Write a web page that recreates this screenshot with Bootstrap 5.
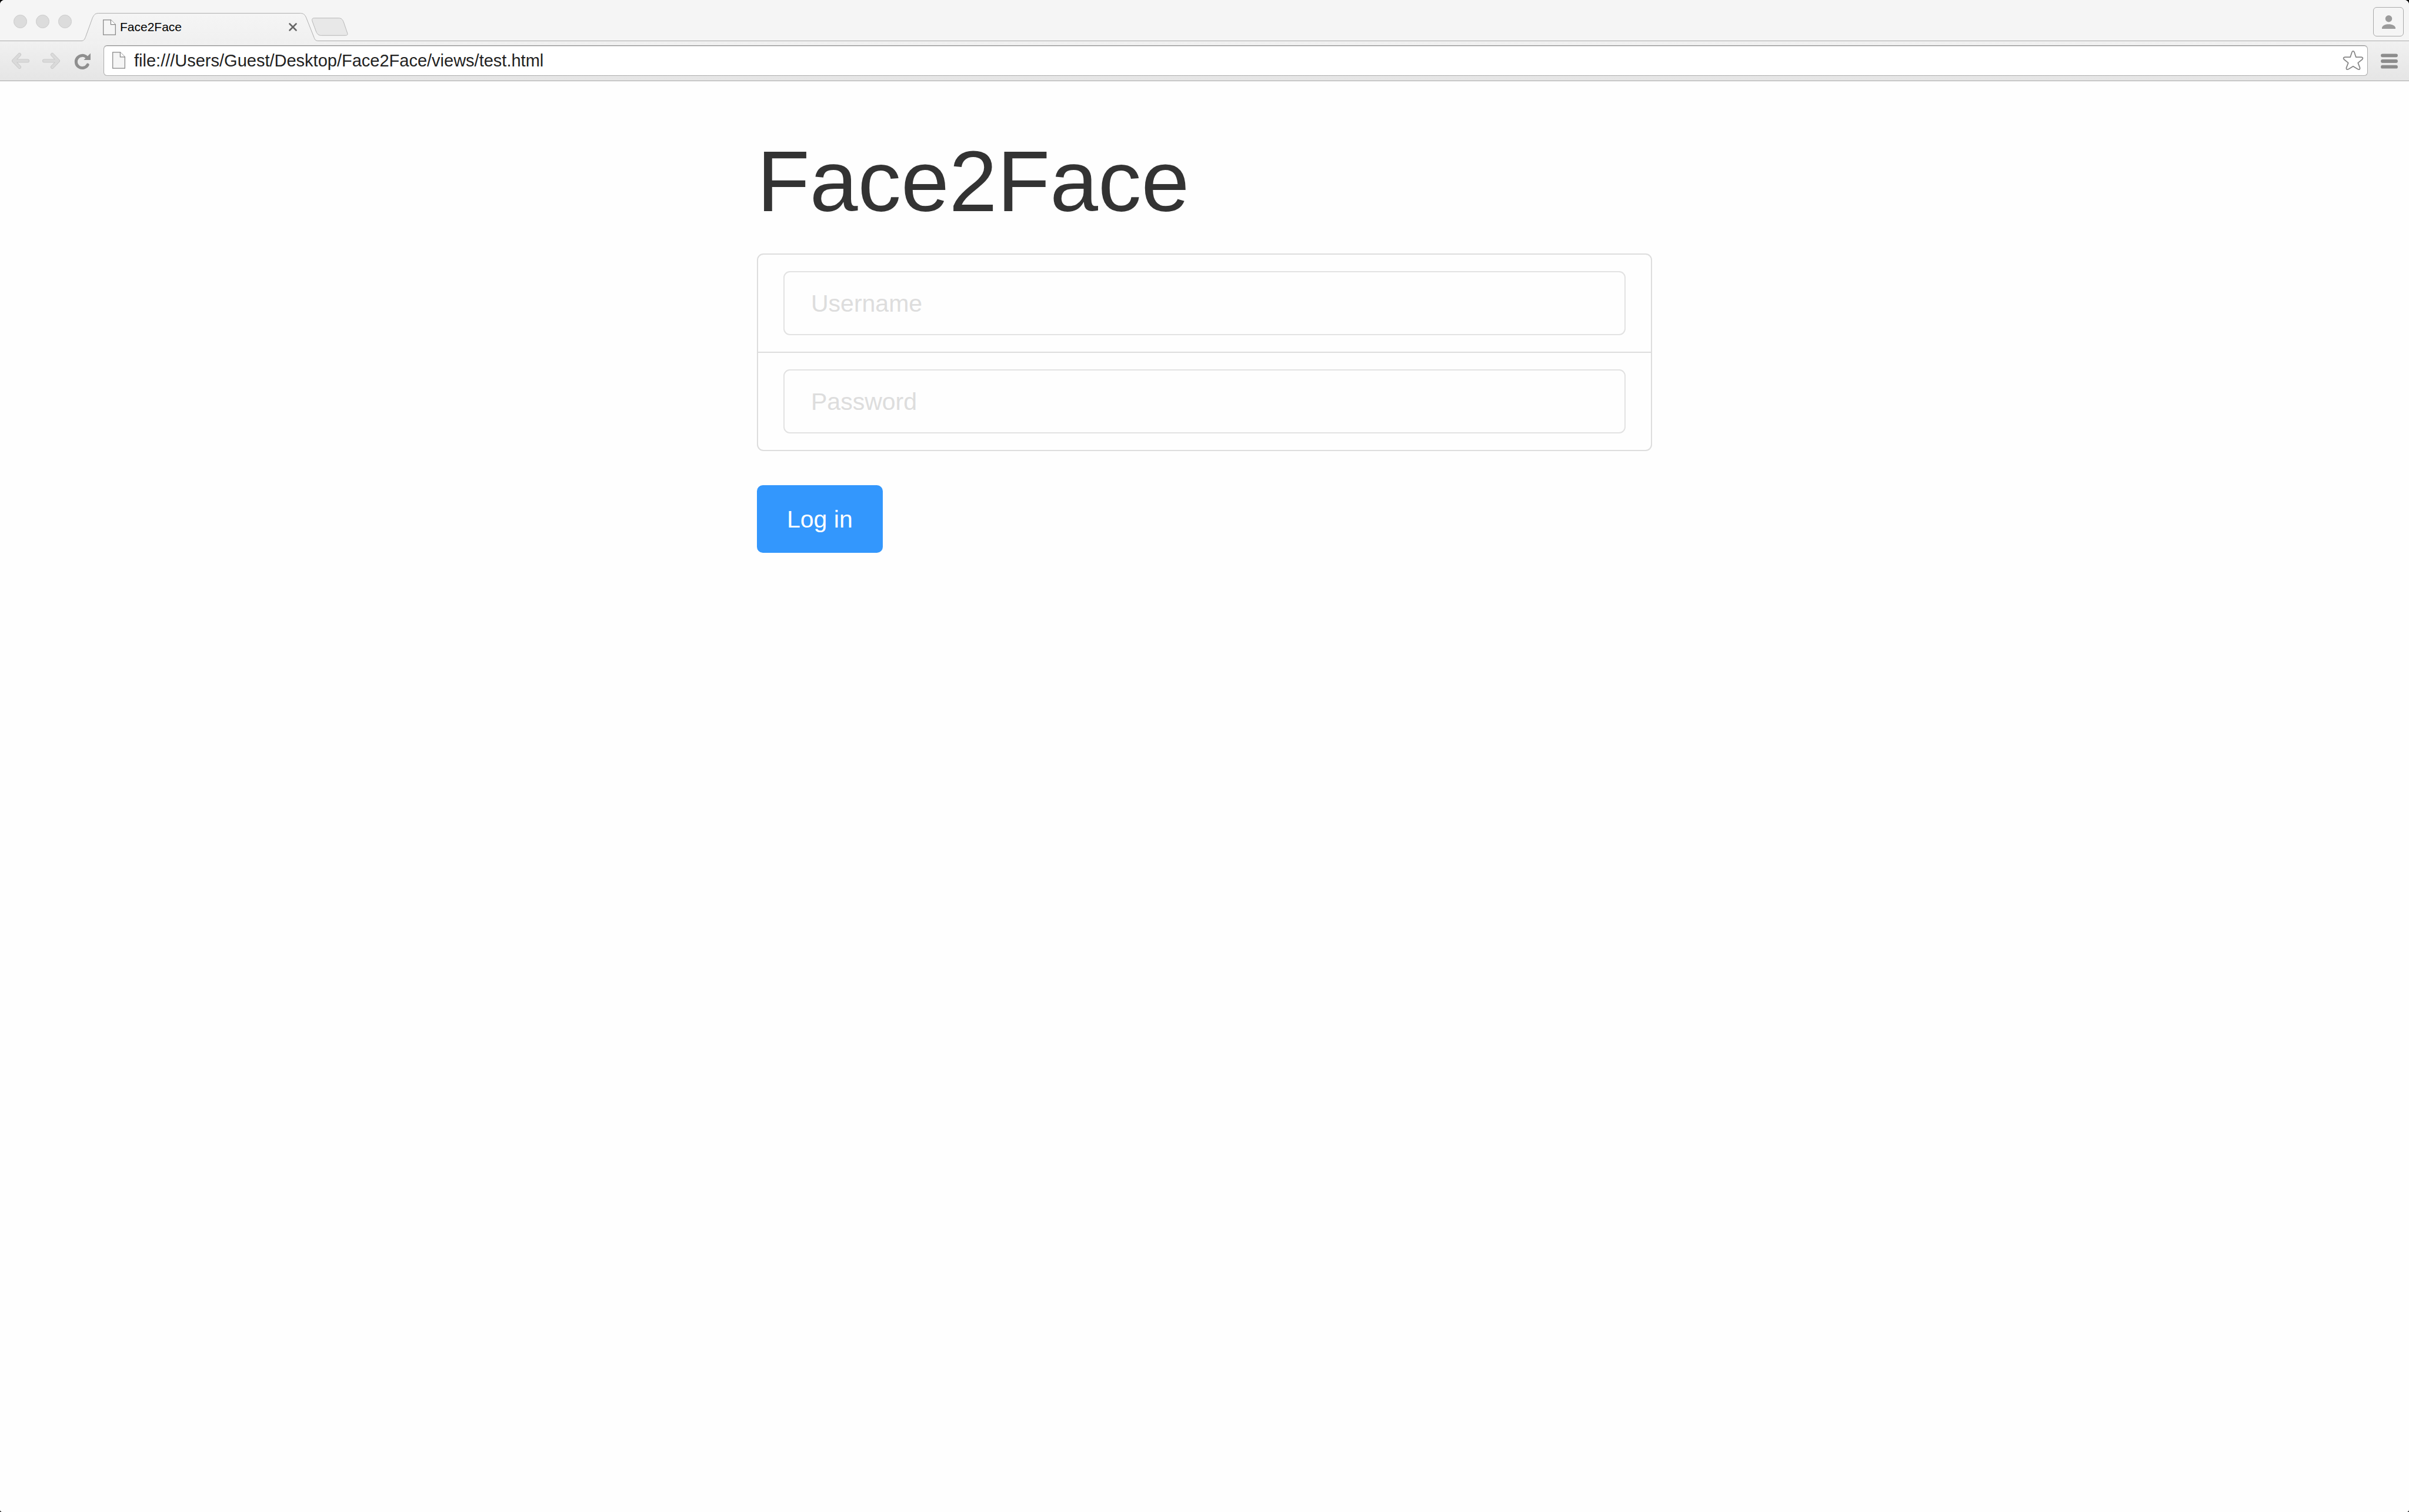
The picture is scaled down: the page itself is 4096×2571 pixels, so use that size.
<!DOCTYPE html>
<html lang="en">
<head>
<meta charset="utf-8">
<meta name="viewport" content="width=device-width, initial-scale=1">
<title>Face2Face</title>
<link href="https://cdn.jsdelivr.net/npm/bootstrap@5.3.0/dist/css/bootstrap.min.css" rel="stylesheet">
<style>
  html { background: #000; }
  body { background: transparent; font-family: "Liberation Sans", Arial, sans-serif; color: #333; }
  svg { display: block; overflow: visible; }
  .browser { background: #fefefe; border-radius: 8px 8px 4px 4px; overflow: hidden; }
  .plain-btn { background: none; border: 0; padding: 0; }

  .tab-strip { height: 70px; background: #f5f5f5; border-bottom: 1px solid #ababab; padding: 0 9px 0 23px; }
  .lights { gap: 15px; padding-top: 25px; margin-right: 17px; }
  .light { width: 23px; height: 23px; border-radius: 50%; background: #dcdcdc; border: 1px solid #cbcbcb; }
  .page-tab { width: 402px; height: 48px; margin-top: 22px; padding: 0 36px; gap: 7px; }
  .tab-shape { position: absolute; left: 0; top: 0; }
  .tab-title { font-size: 21px; line-height: 24px; color: #000; }
  .new-tab { margin: 30px 0 0 -11px; }
  .profile { width: 52px; height: 50px; margin-top: 12px; border: 1px solid #a9a9a9; border-radius: 6px; }

  .tool-bar { height: 68px; background: linear-gradient(#f1f1f1, #e5e5e5); border-bottom: 1px solid #a8a8a8; padding: 0 19px 0 20px; gap: 22px; }
  .omnibox { height: 52px; background: #fff; border: 1px solid #acacac; border-top-color: #8e8e8e; border-radius: 6px; padding: 0 7px 0 14px; gap: 15px; box-shadow: inset 0 1px 1px #ddd; margin-top: -2px; }
  .omnibox input { font-size: 29px; line-height: 34px; color: #222; border: 0; outline: 0; background: none; padding: 0; }

  .login { max-width: 1522px; padding-top: 89px; }
  .login h1 { font-size: 147px; line-height: 163px; font-weight: 400; margin-bottom: 41px; color: #333; }
  .field-list { border: 2px solid #ddd; border-radius: 11px; margin-bottom: 58px; }
  .field-row { padding: 28px 43px; }
  .field-row + .field-row { border-top: 2px solid #ddd; }
  .field-row .form-control { height: 109px; font-size: 41px; line-height: 56px; padding: 2px 45px 0; border: 2px solid #e2e2e2; border-radius: 11px; background: #fefefe; }
  .field-row .form-control::placeholder { color: #ddd; }
  .btn-login { background: #3397fd; color: #fff; border: 0; border-radius: 10px; font-size: 41px; line-height: 56px; padding: 30px 51px 29px; }
  .btn-login:hover { background: #1d87f2; color: #fff; }
</style>
<script src="https://cdn.jsdelivr.net/npm/bootstrap@5.3.0/dist/js/bootstrap.bundle.min.js"></script>
</head>
<body>
<div class="browser min-vh-100">
  <header>
    <div class="tab-strip d-flex align-items-start">
      <div class="lights d-flex">
        <span class="light"></span><span class="light"></span><span class="light"></span>
      </div>
      <div class="page-tab position-relative d-flex align-items-center">
        <svg class="tab-shape" width="402" height="48" viewBox="0 0 420 50" aria-hidden="true">
          <defs><linearGradient id="tabFill" x1="0" y1="0" x2="0" y2="1"><stop offset="0" stop-color="#f5f5f5"/><stop offset="1" stop-color="#f0f0f0"/></linearGradient></defs>
          <path d="M0 50.500V49.500C4 49.300 5.500 46 7 42L19 9C22 2 25 .5 30 .5H388C394 .5 396.500 3 399 9L412.500 43C414 47 415 49.500 420 49.500V50.500Z" fill="url(#tabFill)"/>
          <path d="M0 49.500C4 49.300 5.500 46 7 42L19 9C22 2 25 .5 30 .5H388C394 .5 396.500 3 399 9L412.500 43C414 47 415 49.500 420 49.500" fill="none" stroke="#ababab"/>
        </svg>
        <svg class="position-relative" width="22" height="27" viewBox="0 0 23 28" aria-hidden="true">
          <path d="M.7.7H14L22.300 9V27.300H.7Z" fill="#f5f5f5" stroke="#858585" stroke-width="1.300"/><path d="M14 .7V9H22.300" fill="#fff" stroke="#858585" stroke-width="1.300"/>
        </svg>
        <span class="tab-title position-relative flex-grow-1">Face2Face</span>
        <button class="plain-btn position-relative" type="button" aria-label="Close tab">
          <svg width="14" height="14" viewBox="0 0 14 14"><path d="M1.500 1.500 12.500 12.500M12.500 1.500 1.500 12.500" stroke="#666" stroke-width="2.600" stroke-linecap="round"/></svg>
        </button>
      </div>
      <button class="plain-btn new-tab" type="button" aria-label="New tab">
        <svg width="62" height="31" viewBox="0 0 65 32"><path d="M4.500.5H48C53 .5 55 3 57 8L63.500 27C64.500 30 63.500 31.500 60 31.500H17C12 31.500 10 29 8 25L1 6C0 2.500 1 .5 4.500 .5Z" fill="#e8e8e8" stroke="#b4b4b4"/></svg>
      </button>
      <button class="plain-btn profile ms-auto d-flex align-items-center justify-content-center" type="button" aria-label="Profile">
        <svg width="23" height="23" viewBox="0 0 24 24"><circle cx="12" cy="6" r="6" fill="#9b9b9b"/><path d="M0 24V22C1 18 6 16 12 16S23 18 24 22V24Z" fill="#9b9b9b"/></svg>
      </button>
    </div>
    <div class="tool-bar d-flex align-items-center">
      <button class="plain-btn" type="button" aria-label="Back">
        <svg width="30" height="27" viewBox="0 0 31 28"><path d="M13.500 3 3 14 13.500 25M4 14H28" fill="none" stroke="#c5c5c5" stroke-width="6" stroke-linecap="round" stroke-linejoin="round"/><path d="M13.500 3 3 14 13.500 25M4 14H28" fill="none" stroke="#dadada" stroke-width="4.500" stroke-linecap="round" stroke-linejoin="round"/></svg>
      </button>
      <button class="plain-btn" type="button" aria-label="Forward">
        <svg width="30" height="27" viewBox="0 0 31 28"><path d="M17.500 3 28 14 17.500 25M27 14H3" fill="none" stroke="#c5c5c5" stroke-width="6" stroke-linecap="round" stroke-linejoin="round"/><path d="M17.500 3 28 14 17.500 25M27 14H3" fill="none" stroke="#dadada" stroke-width="4.500" stroke-linecap="round" stroke-linejoin="round"/></svg>
      </button>
      <button class="plain-btn" type="button" aria-label="Reload">
        <svg width="30" height="27" viewBox="-1 0 31 28"><path d="M23 7.500A11 11 0 1 0 25 21" fill="none" stroke="#8f8f8f" stroke-width="5.200" stroke-linecap="round"/><path d="M30 .5V12.500H18Z" fill="#8f8f8f"/></svg>
      </button>
      <div class="omnibox d-flex align-items-center flex-grow-1">
        <svg width="22" height="29" viewBox="0 0 23 30" aria-hidden="true">
          <path d="M.7.7H14L22.300 9V29.300H.7Z" fill="#f5f5f5" stroke="#858585" stroke-width="1.300"/><path d="M14 .7V9H22.300" fill="#fff" stroke="#858585" stroke-width="1.300"/>
        </svg>
        <input class="flex-grow-1" type="text" aria-label="Address" value="file:///Users/Guest/Desktop/Face2Face/views/test.html">
        <button class="plain-btn" type="button" aria-label="Bookmark this page">
          <svg width="34" height="33" viewBox="0 0 35 34"><path d="M15.500 2.500Q17.500-.5 19.500 2.500L22.500 11.500 32 11.500Q36 12.500 33.500 15.500L26 21.500 29.500 30.500Q29.500 34.500 25.500 32.500L17.500 27.500 9.500 32.500Q5.500 34.500 5.500 30.500L9 21.500 1.500 15.500Q-1 12.500 3 11.500L12.500 11.500Z" fill="#fff" stroke="#858585" stroke-width="1.800" stroke-linejoin="round"/></svg>
        </button>
      </div>
      <button class="plain-btn" type="button" aria-label="Menu">
        <svg width="29" height="26" viewBox="0 0 30 27"><path d="M3 3.500H27M3 13.500H27M3 23.500H27" stroke="#8c8c8c" stroke-width="6" stroke-linecap="round"/></svg>
      </button>
    </div>
  </header>

  <main class="login container-fluid px-0">
    <h1>Face2Face</h1>
    <form>
      <div class="field-list">
        <div class="field-row">
          <input class="form-control" id="username" type="text" placeholder="Username" aria-label="Username">
        </div>
        <div class="field-row">
          <input class="form-control" id="password" type="password" placeholder="Password" aria-label="Password">
        </div>
      </div>
      <button class="btn btn-login" type="button">Log in</button>
    </form>
  </main>
</div>
</body>
</html>
